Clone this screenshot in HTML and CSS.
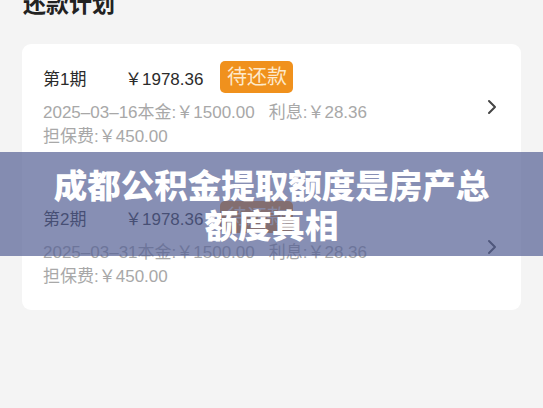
FILE: index.html
```html
<!DOCTYPE html>
<html lang="zh-CN">
    <head>
        <meta charset="UTF-8" />
        <meta name="viewport" content="width=device-width, initial-scale=1.0" />
        <title>还款计划</title>
        <link rel="stylesheet" href="styles.css">
    </head>
    <body>
        <header>
            <h1 class="pageTitle">还款计划</h1>
        </header>

        <main class="planCard">
            <section class="planRow">
                <div class="planInfo">
                    <div class="planHead">
                        <span class="period">第1期</span>
                        <span class="amount">￥1978.36</span>
                        <span class="badge">待还款</span>
                    </div>
                    <p class="detail">2025–03–16本金:￥1500.00<span class="interest">利息:￥28.36</span></p>
                    <p class="detail">担保费:￥450.00</p>
                </div>
                <svg class="chevron" width="10" height="16" viewBox="0 0 10 16">
                    <path d="M2 2 L8 8 L2 14" />
                </svg>
            </section>

            <section class="planRow">
                <div class="planInfo">
                    <div class="planHead">
                        <span class="period">第2期</span>
                        <span class="amount">￥1978.36</span>
                        <span class="badge">待还款</span>
                    </div>
                    <p class="detail">2025–03–31本金:￥1500.00<span class="interest">利息:￥28.36</span></p>
                    <p class="detail">担保费:￥450.00</p>
                </div>
                <svg class="chevron" width="10" height="16" viewBox="0 0 10 16">
                    <path d="M2 2 L8 8 L2 14" />
                </svg>
            </section>
        </main>

        <div class="banner">
            <h2 class="bannerText">成都公积金提取额度是房产总额度真相</h2>
        </div>
    </body>
</html>
```

FILE: styles.css
```css
body {
    font-family: "Liberation Sans", "Noto Sans CJK SC", sans-serif;
    margin: 0;
    padding: 0;
    background-color: #f4f4f4;
    color: #2b2b2b;
    position: relative;
    height: 408px;
    overflow: hidden;
}

header {
    padding: 0 23px;
}

.pageTitle {
    margin: -11px 0 0 0;
    font-size: 23px;
    line-height: 30px;
    font-weight: 600;
    color: #222;
}

.planCard {
    margin: 25px 22px 0 22px;
    padding: 17px 24px 21px 21px;
    background-color: #fff;
    border-radius: 9px;
    display: flex;
    flex-direction: column;
    gap: 52px;
}

.planRow {
    display: flex;
    align-items: center;
    justify-content: space-between;
}

.planHead {
    display: flex;
    align-items: center;
    height: 32px;
    font-size: 17px;
    color: #2b2b2b;
}

.period {
    width: 82px;
}

.amount {
    margin-right: 17px;
}

.badge {
    display: inline-block;
    width: 73px;
    height: 32px;
    line-height: 32px;
    text-align: center;
    font-size: 20px;
    color: #fde9cc;
    background-color: #f0911d;
    border-radius: 5px;
}

.detail {
    margin: 0;
    font-size: 17px;
    line-height: 24px;
    color: #a8a8a8;
}

.planHead + .detail {
    margin-top: 8px;
}

.interest {
    margin-left: 14px;
}

.chevron {
    margin-top: 4px;
}

.chevron path {
    fill: none;
    stroke: #444;
    stroke-width: 2;
    stroke-linecap: round;
    stroke-linejoin: round;
}

.banner {
    position: absolute;
    left: 0;
    right: 0;
    top: 152px;
    height: 104px;
    background-color: rgba(84, 95, 148, 0.7);
    display: flex;
    align-items: center;
    justify-content: center;
    padding: 0 44px;
}

.bannerText {
    margin: 0;
    font-family: "Noto Sans CJK SC", sans-serif;
    font-size: 33.5px;
    line-height: 40px;
    font-weight: 900;
    color: #fff;
    text-align: center;
}
```
